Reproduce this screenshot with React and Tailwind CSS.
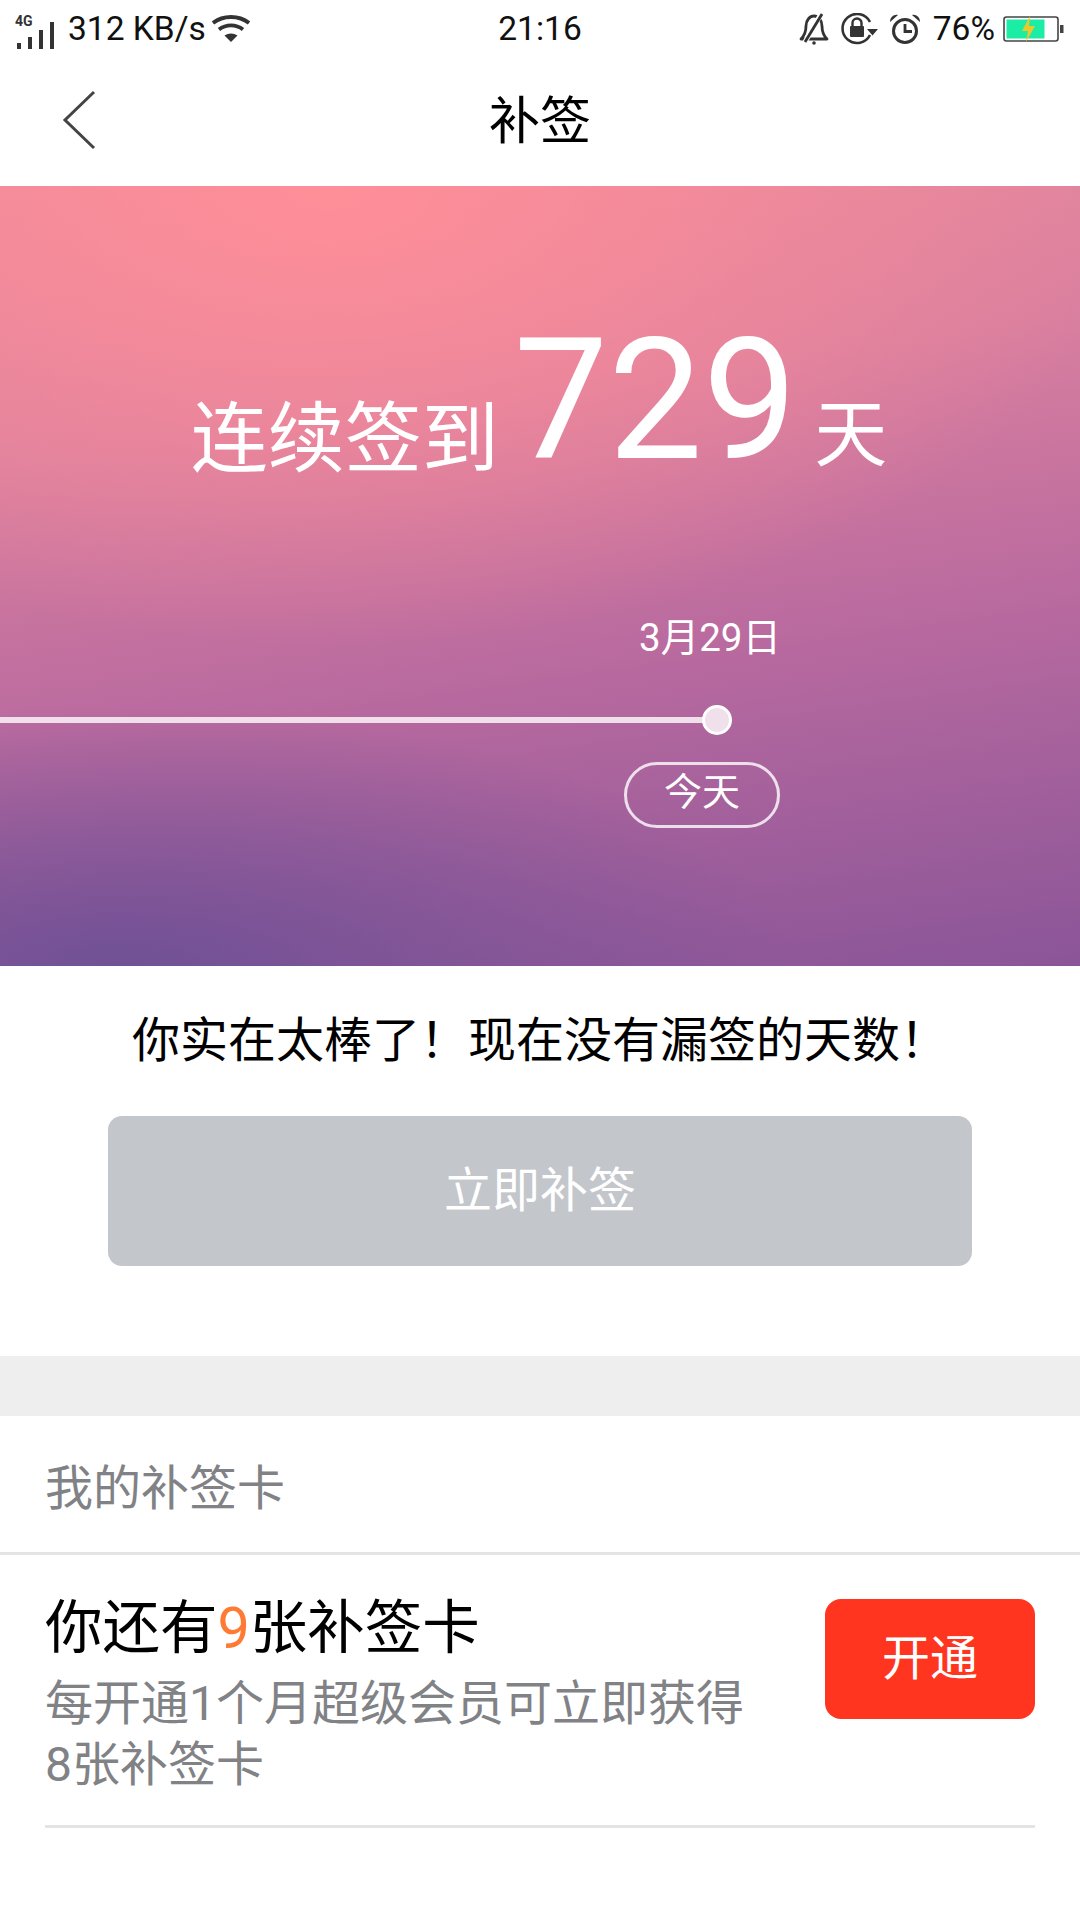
import React from "react";

function Signal() {
  return (
    <svg width="40" height="28" viewBox="0 0 40 28" className="block">
      <rect x="0" y="21" width="4" height="6" fill="#333" />
      <rect x="11" y="15" width="4" height="12" fill="#333" />
      <rect x="22" y="8" width="4" height="19" fill="#333" />
      <rect x="33" y="0" width="4" height="27" fill="#333" />
    </svg>
  );
}

function Wifi() {
  return (
    <svg width="38" height="28" viewBox="0 0 38 28" className="block">
      <path d="M1 8 C11 0 27 0 37 8" fill="none" stroke="#333" strokeWidth="3.8" />
      <path d="M7 14.5 C14 9 24 9 31 14.5" fill="none" stroke="#333" strokeWidth="3.8" />
      <path d="M12.5 20.5 C16.5 17.8 21.5 17.8 25.5 20.5 L19 27 Z" fill="#333" />
    </svg>
  );
}

function Bell() {
  return (
    <svg width="30" height="32" viewBox="0 0 30 32" className="block">
      <path d="M2 26 C6 22 7 18 7 13 C7 7 11 3 15 3 C19 3 23 7 23 13 C23 18 24 22 28 26 Z" fill="none" stroke="#333" strokeWidth="2.8" strokeLinejoin="round" />
      <path d="M22 1 L6 29" stroke="#fff" strokeWidth="5" />
      <path d="M23 1 L6 29" stroke="#333" strokeWidth="2.8" />
      <circle cx="15" cy="30" r="1.8" fill="#333" />
    </svg>
  );
}

function LockRotate() {
  return (
    <svg width="38" height="32" viewBox="0 0 38 32" className="block">
      <path d="M29 22 A14.5 14.5 0 1 1 29 9" fill="none" stroke="#333" strokeWidth="2.6" />
      <rect x="9" y="13" width="14" height="11" rx="1" fill="#333" />
      <path d="M11.5 13 V10 A4.5 4.5 0 0 1 20.5 10 V13" fill="none" stroke="#333" strokeWidth="2.4" />
      <path d="M26 16 H37 L31.5 22.5 Z" fill="#333" />
    </svg>
  );
}

function Alarm() {
  return (
    <svg width="32" height="32" viewBox="0 0 32 32" className="block">
      <circle cx="16" cy="18" r="11.5" fill="none" stroke="#333" strokeWidth="3" />
      <path d="M16 11 V18.5 H23" fill="none" stroke="#333" strokeWidth="2.8" />
      <path d="M1 9 C1 4 5 1 9 2 Z" fill="#333" />
      <path d="M31 9 C31 4 27 1 23 2 Z" fill="#333" />
    </svg>
  );
}

function Battery() {
  return (
    <svg width="62" height="26" viewBox="0 0 62 26" className="block">
      <rect x="1" y="1" width="54" height="24" rx="2.5" fill="#fff" stroke="#444" strokeWidth="1.6" />
      <rect x="3.5" y="3.5" width="38" height="19" fill="#1bedA5" />
      <rect x="57" y="9" width="3.5" height="8" fill="#444" />
      <path d="M27 0 L19 15 H25 L23 26 L32 10 H26 Z" fill="#e8c92e" />
    </svg>
  );
}

export default function App() {
  return (
    <div className="w-[1080px] h-[1920px] bg-white overflow-hidden font-['Roboto','Noto_Sans_CJK_SC',sans-serif] text-black">
      {/* status bar */}
      <div className="h-[56px] pt-[1px] flex items-center pl-[17px] pr-[15px] text-[33.5px] leading-none text-[#111]">
        <div className="flex-1 flex items-center min-w-0">
          <div className="relative w-[40px] h-[40px]">
            <span className="absolute left-[-2px] top-[5px] text-[14px] leading-none font-bold text-[#333]">4G</span>
            <div className="absolute left-0 top-[13px]"><Signal /></div>
          </div>
          <span className="ml-[11px] mr-[6px] whitespace-nowrap">312 KB/s</span>
          <Wifi />
        </div>
        <div className="whitespace-nowrap pr-[2px]">21:16</div>
        <div className="flex-1 flex items-center justify-end">
          <Bell />
          <div className="ml-[12px]"><LockRotate /></div>
          <div className="ml-[10px]"><Alarm /></div>
          <span className="ml-[12px] mr-[8px] whitespace-nowrap">76%</span>
          <Battery />
        </div>
      </div>

      {/* nav */}
      <div className="relative h-[130px] flex items-center justify-center">
        <svg width="34" height="60" viewBox="0 0 34 60" className="absolute left-[62px] top-[34px]">
          <path d="M32 2 L3 30 L32 58" fill="none" stroke="#444" strokeWidth="3" />
        </svg>
        <div className="text-[51px] leading-none text-black">补签</div>
      </div>

      {/* hero */}
      <div className="h-[780px] text-white bg-[radial-gradient(ellipse_800px_460px_at_330px_0px,#ff8e98_0%,#ff8e9800_100%),radial-gradient(ellipse_680px_270px_at_120px_790px,#6f5095_0%,#6f509500_100%),linear-gradient(172deg,#e88a9d_0%,#d97f9f_30%,#b96a9f_60%,#8a5598_100%)]">
        <div className="pt-[131px] pr-[2px] flex justify-center items-baseline h-[300px]">
          <span className="text-[77px] leading-none translate-y-[8px]">连续签到</span>
          <span className="text-[168px] leading-none ml-[15px] mr-[17px]">729</span>
          <span className="text-[73px] leading-none translate-y-[2px]">天</span>
        </div>
        <div className="pt-[133px] h-[156px] flex justify-end pr-[299px]">
          <span className="text-[38.5px] leading-none whitespace-nowrap">3月29日</span>
        </div>
        <div className="relative mt-[63px] h-[30px] w-[732px] flex items-center">
          <div className="w-[717px] h-[6px] bg-[#f0e0ec]" />
          <div className="absolute right-0 top-0 w-[30px] h-[30px] rounded-full bg-[#f0e0ec] border-[3px] border-white" />
        </div>
        <div className="mt-[27px] flex justify-end pr-[300px]">
          <div className="w-[156px] h-[66px] rounded-full border-[3px] border-white/80 flex items-center justify-center text-[38px] leading-none pb-[6px]">今天</div>
        </div>
      </div>

      {/* message */}
      <div className="h-[150px] flex items-center justify-center text-[48px] leading-none text-black">你实在太棒了！现在没有漏签的天数！</div>
      <div className="mx-[108px] h-[150px] rounded-[14px] bg-[#c3c6cb] flex items-center justify-center text-[48px] leading-none text-white">立即补签</div>
      <div className="h-[90px]" />
      <div className="h-[60px] bg-[#eeeeee]" />

      {/* card header */}
      <div className="h-[126px] pl-[45px] pt-[10px] flex items-center text-[48px] leading-none text-[#818286] border-b-[3px] border-[#e4e4e4] box-content">我的补签卡</div>

      {/* card row */}
      <div className="mx-[45px] border-b-[3px] border-[#e4e4e4] h-[273px] flex justify-between pt-[44px]">
        <div>
          <div className="text-[57.5px] leading-[60px] text-black">你还有<span className="text-[#ff7a33]">9</span>张补签卡</div>
          <div className="mt-[14px] w-[710px] text-[48px] leading-[61px] text-[#818286]">每开通1个月超级会员可立即获得<br />8张补签卡</div>
        </div>
        <div className="w-[210px] h-[120px] rounded-[16px] bg-[#ff3520] text-white text-[48px] leading-none flex items-center justify-center">开通</div>
      </div>
    </div>
  );
}
